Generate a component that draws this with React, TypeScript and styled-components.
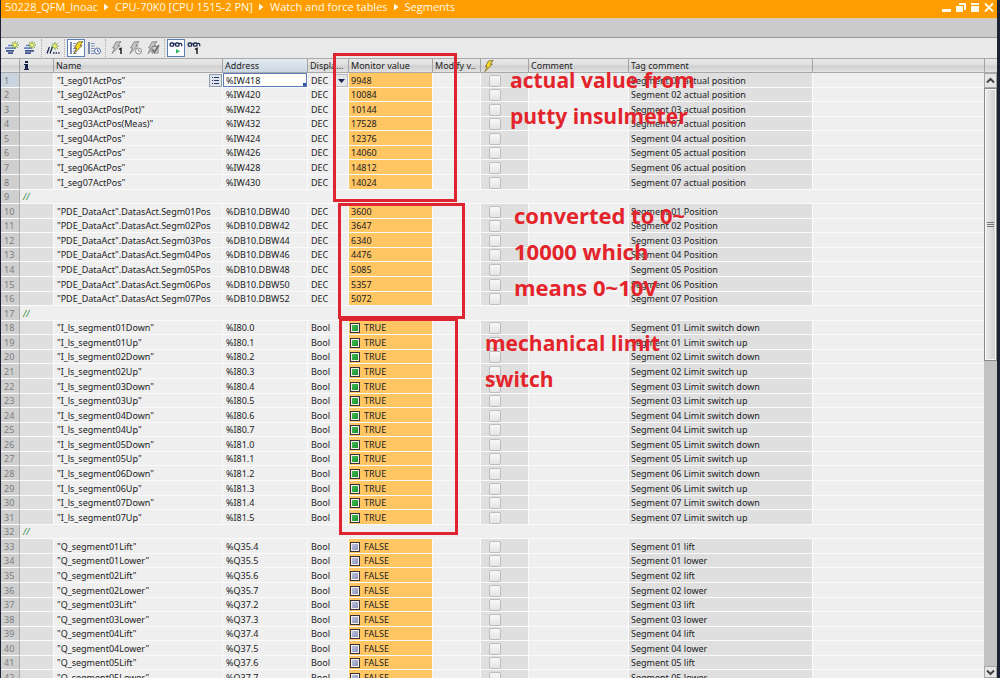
import React from "react";
import styled, { createGlobalStyle, css } from "styled-components";

const GlobalStyle = createGlobalStyle`
  * { box-sizing: border-box; }
  body {
    margin: 0;
    background: #1b2236;
    font-family: "Noto Sans", "Open Sans", sans-serif;
    font-size: 9px;
    color: #1c1c24;
  }
  button, input, select { font: inherit; color: inherit; margin: 0; padding: 0; }
`;

const Screen = styled.div`
  position: relative;
  height: 100vh;
  overflow: hidden;
  padding: 0 3px 0 1px;
  display: flex;
  flex-direction: column;
`;

const TitleBar = styled.header`
  flex: none;
  height: 18px;
  padding: 0 3px 4px 4px;
  background: #ff9c00;
  display: flex;
  align-items: center;
  justify-content: space-between;
`;

const Crumbs = styled.nav`
  display: flex;
  align-items: center;
  gap: 6px;
  font-family: "Open Sans", "Noto Sans", sans-serif;
  font-size: 11px;
  line-height: 14px;
  font-weight: 500;
  white-space: nowrap;
`;

const Crumb = styled.a`
  color: #fffbe8;
  text-decoration: none;
`;

const WindowButtons = styled.div`
  display: flex;
  gap: 4px;
`;

const WindowButton = styled.button`
  width: 10px;
  height: 12px;
  border: 0;
  background: none;
  display: flex;
`;

const SubBar = styled.div`
  flex: none;
  height: 20px;
  background: #cbcbcb;
  border-top: 1px solid #e2c9a0;
  border-bottom: 1px solid #999;
`;

const Toolbar = styled.div`
  flex: none;
  height: 20px;
  padding-left: 2px;
  background: #e9e9e9;
  display: flex;
  align-items: center;
`;

const Tool = styled.button<{ $active?: boolean }>`
  width: 18px;
  height: 18px;
  border: 1px solid transparent;
  background: none;
  display: flex;
  align-items: center;
  justify-content: center;
  ${(p) =>
    p.$active &&
    css`
      border-color: #5d7fb8;
      background: #fbfcff;
    `}
`;

const ToolDivider = styled.span`
  width: 1px;
  height: 18px;
  margin: 0 2px;
  border-left: 1px dotted #aaa;
`;

const Body = styled.main`
  flex: 1;
  min-height: 0;
  display: flex;
`;

const TablePane = styled.div`
  flex: 1;
  min-width: 0;
  overflow: hidden;
  background: #efefef;
`;

const headerFill = css`
  background: linear-gradient(#e9e9e9 0, #dedede 45%, #cfcfcf 55%, #e2e2e2 100%);
  border-top: 1px solid #a9a9a9;
  border-bottom: 1px solid #a9a9a9;
`;

const Grid = styled.table`
  width: 100%;
  table-layout: fixed;
  border-collapse: separate;
  border-spacing: 0;
`;

const Col = styled.col<{ $w?: number }>`
  ${(p) => p.$w && `width: ${p.$w}px;`}
`;

const Th = styled.th<{ $lit?: boolean }>`
  ${headerFill}
  height: 15px;
  padding: 0 0 0 2px;
  border-right: 1px solid #a4a4a4;
  line-height: 13px;
  font-weight: 400;
  text-align: left;
  white-space: nowrap;
  overflow: hidden;
  ${(p) => p.$lit && "background: linear-gradient(#e4ebf2, #cbd6e0);"}
  &:last-child { border-right: 0; }
`;

const HeadIcon = styled.svg`
  display: block;
`;

const Row = styled.tr<{ $h: number }>`
  height: ${(p) => p.$h}px;
`;

type Tone = "plain" | "shaded" | "value" | "gutter" | "current";

const tones: Record<Tone, string> = {
  plain: "background: #efefef;",
  shaded: "background: #dfdfdf; padding-left: 2px;",
  value: "background: #ffc663; padding-left: 2px;",
  gutter: "background: #cfcfcf; color: #7d7d7d; border-right-color: #a9a9a9;",
  current: "background: #c9d4de; color: #7d7d7d; border-right-color: #a9a9a9;",
};

const Td = styled.td<{ $tone?: Tone; $flush?: boolean }>`
  padding: ${(p) => (p.$flush ? "0" : "1px 0 0 3px")};
  border-right: 1px solid #fafafa;
  border-bottom: 1px solid #fafafa;
  line-height: 12px;
  white-space: nowrap;
  overflow: hidden;
  ${(p) => tones[p.$tone ?? "plain"]}
  &:last-child { border-right: 0; }
`;

const Divider = styled(Td)`
  color: #2e8b3d;
  font-style: italic;
`;

const Spread = styled.div`
  height: 13px;
  display: flex;
  align-items: center;
  justify-content: space-between;
`;

const PickButton = styled.button`
  width: 13px;
  height: 13px;
  border: 1px solid #8f9bb0;
  background: #dfe4ec;
  display: flex;
  align-items: center;
  justify-content: center;
`;

const AddressInput = styled.input`
  display: block;
  width: 100%;
  height: 14px;
  padding-left: 2px;
  border: 1px solid #5c7cb6;
  border-radius: 0;
  outline: 0;
  background: linear-gradient(#2f56a0, #2f56a0) right bottom / 3px 3px no-repeat #fff;
`;

const FormatSelect = styled.select`
  appearance: none;
  flex: 1;
  min-width: 0;
  height: 13px;
  border: 0;
  background: none;
  outline: 0;
`;

const Arrow = styled.svg`
  flex: none;
  width: 13px;
  height: 13px;
  border: 1px solid #b5b9c2;
  background: #e3e5ea;
`;

const Flag = styled.div`
  display: flex;
  align-items: center;
  gap: 4px;
  margin-left: -1px;
`;

const Lamp = styled.span<{ $on: boolean }>`
  width: 10px;
  height: 10px;
  border: 1px solid #38313c;
  box-shadow: inset 0 0 0 1px #f3efe6;
  background: ${(p) =>
    p.$on ? "linear-gradient(135deg, #4cc25c, #118a27)" : "linear-gradient(135deg, #c3c9e2, #838cb4)"};
`;

const Tick = styled.input`
  appearance: none;
  display: block;
  width: 12px;
  height: 12px;
  margin-left: 6px;
  border: 1px solid #bdbdbd;
  border-radius: 2px;
  background: linear-gradient(#f8f8f8, #e4e4e4);
`;

const ScrollColumn = styled.div`
  flex: none;
  width: 13px;
  display: flex;
  flex-direction: column;
  background: #c2c2c2;
`;

const ScrollHead = styled.div`
  ${headerFill}
  flex: none;
  height: 15px;
  border-left: 1px solid #a4a4a4;
`;

const ScrollButton = styled.button`
  flex: none;
  height: 15px;
  border: 1px solid #a6a6a6;
  background: #e6e6e6;
  display: flex;
  align-items: center;
  justify-content: center;
`;

const ScrollDown = styled(ScrollButton)`
  height: 12px;
`;

const Track = styled.div`
  flex: 1;
  display: flex;
  flex-direction: column;
`;

const Thumb = styled.div`
  flex: 8;
  border: 1px solid #8a8a8a;
  box-shadow: inset 0 0 0 1px #f8f8f8;
  background: linear-gradient(90deg, #ececec, #cfcfcf);
  display: flex;
  align-items: center;
  justify-content: center;
`;

const TrackRest = styled.div`
  flex: 9;
`;

const Frame = styled.div<{ $x: number; $y: number; $w: number; $h: number }>`
  position: absolute;
  left: ${(p) => p.$x}px;
  top: ${(p) => p.$y}px;
  width: ${(p) => p.$w}px;
  height: ${(p) => p.$h}px;
  border: 3px solid #dd2430;
  pointer-events: none;
`;

const Note = styled.p<{ $x: number; $y: number; $size: number }>`
  position: absolute;
  left: ${(p) => p.$x}px;
  top: ${(p) => p.$y}px;
  margin: 0;
  color: #e3242b;
  font-family: "Open Sans", "Noto Sans", sans-serif;
  font-size: ${(p) => p.$size}px;
  line-height: 36px;
  font-weight: 700;
  white-space: pre-line;
  pointer-events: none;
`;

type Item = { name: string; address: string; format: string; value: string; tag: string };

const pad = (n: number) => String(n).padStart(2, "0");

const actual: Item[] = [
  ["01ActPos", "418", "9948", "01"],
  ["02ActPos", "420", "10084", "02"],
  ["03ActPos(Pot)", "422", "10144", "03"],
  ["03ActPos(Meas)", "432", "17528", "07"],
  ["04ActPos", "424", "12376", "04"],
  ["05ActPos", "426", "14060", "05"],
  ["06ActPos", "428", "14812", "06"],
  ["07ActPos", "430", "14024", "07"],
].map(([n, a, v, t]) => ({
  name: `"I_seg${n}"`,
  address: `%IW${a}`,
  format: "DEC",
  value: v,
  tag: `Segment ${t} actual position`,
}));

const converted: Item[] = ["3600", "3647", "6340", "4476", "5085", "5357", "5072"].map((value, i) => ({
  name: `"PDE_DataAct".DatasAct.Segm${pad(i + 1)}Pos`,
  address: `%DB10.DBW${40 + i * 2}`,
  format: "DEC",
  value,
  tag: `Segment ${pad(i + 1)} Position`,
}));

const limits: Item[] = Array.from({ length: 14 }, (_, i) => {
  const seg = pad(Math.floor(i / 2) + 1);
  const up = i % 2 === 1;
  return {
    name: `"I_ls_segment${seg}${up ? "Up" : "Down"}"`,
    address: `%I${80 + Math.floor(i / 8)}.${i % 8}`,
    format: "Bool",
    value: "TRUE",
    tag: `Segment ${seg} Limit switch ${up ? "up" : "down"}`,
  };
});

const outputs = ["35.4", "35.5", "35.6", "35.7", "37.2", "37.3", "37.4", "37.5", "37.6", "37.7"];
const drives: Item[] = outputs.map((address, i) => {
  const seg = pad(Math.floor(i / 2) + 1);
  const lower = i % 2 === 1;
  return {
    name: `"Q_segment${seg}${lower ? "Lower" : "Lift"}"`,
    address: `%Q${address}`,
    format: "Bool",
    value: "FALSE",
    tag: `Segment ${seg} ${lower ? "lower" : "lift"}`,
  };
});

const rows: (Item | null)[] = [...actual, null, ...converted, null, ...limits, null, ...drives];

// Rows run in groups of seven, four of 15px and three of 14px.
const rowHeight = (i: number) => ((i % 7) % 2 === 0 ? 15 : 14);

const columns = [19, 34, 169, 85, 41, 84, 48, 48, 100, 184];

const CrumbArrow = () => (
  <svg width="5" height="8" viewBox="0 0 5 8" aria-hidden="true">
    <path d="M0 0.5L4.5 4L0 7.5Z" fill="#fffbe8" />
  </svg>
);

const Spark = ({ x, y }: { x: number; y: number }) => (
  <g transform={`translate(${x} ${y})`}>
    <path d="M0-4V4M-4 0H4M-3-3L3 3M3-3L-3 3" stroke="#6f9c38" strokeWidth="0.9" />
    <circle r="2" fill="#f4f37a" stroke="#8fb03f" strokeWidth="0.6" />
  </g>
);

const Glasses = () => (
  <g stroke="#1c2850" fill="none" strokeWidth="1.3">
    <rect x="1.2" y="2" width="3.4" height="3.2" rx="1" />
    <rect x="6.6" y="2" width="3.4" height="3.2" rx="1" />
    <path d="M4.6 2.8h2M10 2.8c1.8-1 3-0.4 2.8 2.4" />
  </g>
);

const Bolt = ({ fill = "#f7d82e", stroke = "#6d5a12" }: { fill?: string; stroke?: string }) => (
  <path d="M6 1L11 0.6L8 4.5L10 4.6L2 12.6L4.6 7.2L2.6 7Z" fill={fill} stroke={stroke} strokeWidth="0.8" />
);

const One = ({ x, y }: { x: number; y: number }) => (
  <path d={`M${x} ${y + 1.4}L${x + 2} ${y + 0.4}V${y + 6}`} stroke="#1c1c24" strokeWidth="1.5" fill="none" />
);

const Clock = ({ tone }: { tone: string }) => (
  <g stroke={tone} fill="#f4f6fb">
    <circle cx="10.5" cy="10" r="3" />
    <path d="M10.5 8.2V10.2H12" fill="none" />
  </g>
);

const Sheet = () => (
  <g>
    <path d="M2 1V13" stroke="#4a5f96" strokeWidth="1.4" />
    <path d="M4 2.5H7.5M4 5H7.5M4 7.5H7.5M4 10H7.5M4 12.5H7.5" stroke="#7f90ba" strokeWidth="1.2" />
  </g>
);

const Lines = ({ low }: { low?: boolean }) => (
  <g strokeWidth="1.7">
    <path d={low ? "M3 4.5H8M1 7.2H9" : "M3 4.5H8M0 7.2H11"} stroke="#6a86bd" />
    <path d={low ? "M2 9.8H11M2 12.2H8" : "M1 9.8H9M3 12.2H8"} stroke="#40568f" />
  </g>
);

const ToolIcon = ({ children }: { children: React.ReactNode }) => (
  <svg width="14" height="14" viewBox="0 0 14 14" fill="none" aria-hidden="true">
    {children}
  </svg>
);

const grey = { fill: "#c4c4c4", stroke: "#7c7c7c" };

const AppToolbar = () => (
  <Toolbar role="toolbar">
    <Tool aria-label="Insert row"><ToolIcon><Lines /><Spark x={10} y={4} /></ToolIcon></Tool>
    <Tool aria-label="Add row"><ToolIcon><Lines low /><Spark x={9} y={4} /></ToolIcon></Tool>
    <ToolDivider />
    <Tool aria-label="Insert comment line">
      <ToolIcon>
        <path d="M1 12.5L3.4 6M4 12.5L6.4 6" stroke="#1c2850" strokeWidth="1.3" />
        <path d="M7 12H8.5M9.6 12H11M12.2 12H13.6" stroke="#1c2850" strokeWidth="1.5" />
        <Spark x={9} y={5} />
      </ToolIcon>
    </Tool>
    <ToolDivider />
    <Tool $active aria-label="Show modify columns">
      <ToolIcon><Sheet /><g transform="translate(3 0)"><Bolt /></g></ToolIcon>
    </Tool>
    <Tool aria-label="Show trigger columns"><ToolIcon><Sheet /><Clock tone="#5670a8" /></ToolIcon></Tool>
    <ToolDivider />
    <Tool aria-label="Modify once"><ToolIcon><Bolt {...grey} /><One x={9} y={7} /></ToolIcon></Tool>
    <Tool aria-label="Modify with trigger"><ToolIcon><Bolt {...grey} /><Clock tone="#8a8a8a" /></ToolIcon></Tool>
    <Tool aria-label="Enable outputs">
      <ToolIcon>
        <Bolt {...grey} />
        <path d="M6 5.5H12V12H6Z" fill="#d2d2d2" stroke="#888" />
        <path d="M6.5 8.5L8.5 11L13 4" stroke="#666" strokeWidth="1.4" />
      </ToolIcon>
    </Tool>
    <ToolDivider />
    <Tool $active aria-label="Monitor all">
      <ToolIcon><Glasses /><path d="M7 8L11 10.2L7 12.5Z" fill="#37b45a" /></ToolIcon>
    </Tool>
    <Tool aria-label="Monitor once"><ToolIcon><Glasses /><One x={8} y={7} /></ToolIcon></Tool>
  </Toolbar>
);

const ItemRow = ({ item, index }: { item: Item; index: number }) => {
  const current = index === 0;
  return (
    <Row $h={rowHeight(index)}>
      <Td $tone={current ? "current" : "gutter"}>{index + 1}</Td>
      <Td $tone="shaded" />
      <Td>
        {current ? (
          <Spread>
            <span>{item.name}</span>
            <PickButton aria-label="Choose tag">
              <svg width="9" height="9" viewBox="0 0 9 9" aria-hidden="true">
                <path d="M1 1.5H2M1 4.5H2M1 7.5H2M3 1.5H8M3 4.5H8M3 7.5H8" stroke="#26386e" />
              </svg>
            </PickButton>
          </Spread>
        ) : (
          item.name
        )}
      </Td>
      <Td $flush={current}>
        {current ? <AddressInput aria-label="Address" defaultValue={item.address} /> : item.address}
      </Td>
      <Td>
        {current ? (
          <Spread>
            <FormatSelect aria-label="Display format" defaultValue="DEC">
              <option>DEC</option>
            </FormatSelect>
            <Arrow viewBox="0 0 11 11" aria-hidden="true">
              <path d="M2 4H9L5.5 8Z" fill="#16244e" />
            </Arrow>
          </Spread>
        ) : (
          item.format
        )}
      </Td>
      <Td $tone="value">
        {item.format === "Bool" ? (
          <Flag>
            <Lamp $on={item.value === "TRUE"} />
            {item.value}
          </Flag>
        ) : (
          item.value
        )}
      </Td>
      <Td />
      <Td $tone="shaded">
        <Tick type="checkbox" aria-label={`Modify ${item.name}`} />
      </Td>
      <Td />
      <Td $tone="shaded">{item.tag}</Td>
      <Td />
    </Row>
  );
};

export default function App() {
  return (
    <>
      <GlobalStyle />
      <Screen>
        <TitleBar>
          <Crumbs>
            <Crumb href="#project">50228_QFM_Inoac</Crumb>
            <CrumbArrow />
            <Crumb href="#cpu">CPU-70K0 [CPU 1515-2 PN]</Crumb>
            <CrumbArrow />
            <Crumb href="#tables">Watch and force tables</Crumb>
            <CrumbArrow />
            <Crumb href="#segments">Segments</Crumb>
          </Crumbs>
          <WindowButtons>
            <WindowButton aria-label="Minimize">
              <svg width="10" height="12"><path d="M0 8H9V11H0Z" fill="#fffbe8" /></svg>
            </WindowButton>
            <WindowButton aria-label="Restore">
              <svg width="10" height="12">
                <path d="M3 2H10V9H8V4H3Z" fill="#fffbe8" />
                <path d="M0 5H7V11H0Z" fill="#fffbe8" />
              </svg>
            </WindowButton>
            <WindowButton aria-label="Maximize">
              <svg width="10" height="12">
                <path d="M1 2H9V4H1ZM1 5H9V11H1Z" fill="#fffbe8" />
              </svg>
            </WindowButton>
            <WindowButton aria-label="Close">
              <svg width="10" height="12">
                <path d="M1 2.5L9 10.5M9 2.5L1 10.5" stroke="#fffbe8" strokeWidth="1.8" />
              </svg>
            </WindowButton>
          </WindowButtons>
        </TitleBar>
        <SubBar />
        <AppToolbar />
        <Body>
          <TablePane>
            <Grid>
              <colgroup>
                {columns.map((w, i) => (
                  <Col key={i} $w={w} />
                ))}
                <Col />
              </colgroup>
              <thead>
                <tr>
                  <Th />
                  <Th>
                    <HeadIcon width="8" height="11" viewBox="0 0 8 11" role="img" aria-label="Information">
                      <path d="M3 1H6V3H3ZM2 4H6V9H7V10H2V9H3V5H2Z" fill="#16244e" />
                    </HeadIcon>
                  </Th>
                  <Th>Name</Th>
                  <Th $lit>Address</Th>
                  <Th>Displa...</Th>
                  <Th>Monitor value</Th>
                  <Th>Modify v..</Th>
                  <Th>
                    <HeadIcon width="12" height="12" viewBox="0 0 13 13" role="img" aria-label="Modify">
                      <Bolt />
                    </HeadIcon>
                  </Th>
                  <Th>Comment</Th>
                  <Th>Tag comment</Th>
                  <Th />
                </tr>
              </thead>
              <tbody>
                {rows.map((item, i) =>
                  item ? (
                    <ItemRow key={i} item={item} index={i} />
                  ) : (
                    <Row key={i} $h={rowHeight(i)}>
                      <Td $tone="gutter">{i + 1}</Td>
                      <Divider colSpan={10}>//</Divider>
                    </Row>
                  )
                )}
              </tbody>
            </Grid>
          </TablePane>
          <ScrollColumn>
            <ScrollHead />
            <ScrollButton aria-label="Scroll up">
              <svg width="9" height="7" fill="none"><path d="M1 5.5L4.5 2L8 5.5" stroke="#444" strokeWidth="2" /></svg>
            </ScrollButton>
            <Track>
              <Thumb>
                <svg width="7" height="6"><path d="M0 0.5H7M0 2.5H7M0 4.5H7" stroke="#777" /></svg>
              </Thumb>
              <TrackRest />
            </Track>
            <ScrollDown aria-label="Scroll down">
              <svg width="9" height="7" fill="none"><path d="M1 1.5L4.5 5L8 1.5" stroke="#444" strokeWidth="2" /></svg>
            </ScrollDown>
          </ScrollColumn>
        </Body>
        <Frame $x={333} $y={53} $w={124} $h={149} />
        <Frame $x={338} $y={203} $w={127} $h={116} />
        <Frame $x={339} $y={318} $w={119} $h={217} />
        <Note $x={510} $y={62} $size={21}>{"actual value from\nputty insulmeter"}</Note>
        <Note $x={514} $y={197} $size={22}>{"converted to 0~\n10000 which\nmeans 0~10V"}</Note>
        <Note $x={485} $y={325} $size={21}>{"mechanical limit\nswitch"}</Note>
      </Screen>
    </>
  );
}
